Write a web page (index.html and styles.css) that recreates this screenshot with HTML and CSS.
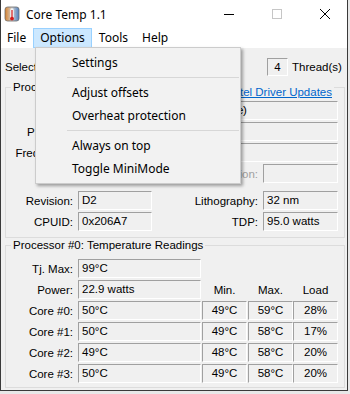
FILE: index.html
```html
<!DOCTYPE html>
<html lang="en">
<head>
    <meta charset="UTF-8">
    <meta name="viewport" content="width=device-width, initial-scale=1.0">
    <title>Core Temp 1.1</title>
    <link rel="stylesheet" href="styles.css">
</head>
<body>
<div class="window">
    <div class="titlebar">
        <svg class="app-icon" viewBox="0 0 16 16">
            <defs>
                <linearGradient id="iconGrad" x1="0" x2="1" y1="0" y2="0">
                    <stop offset="0" stop-color="#d9822b"/>
                    <stop offset="0.5" stop-color="#cfcfcf"/>
                    <stop offset="1" stop-color="#4d7fc0"/>
                </linearGradient>
            </defs>
            <rect x="1" y="1" width="14" height="14" rx="2.5" fill="url(#iconGrad)" stroke="#6b6b6b" stroke-width="0.8"/>
            <rect x="6.3" y="2.3" width="3.4" height="10.5" rx="1.7" fill="#f6f6f6"/>
            <rect x="7.4" y="4" width="1.2" height="8.5" fill="#d41a1a"/>
            <circle cx="8" cy="12.6" r="1.9" fill="#d41a1a"/>
        </svg>
        <span class="title">Core Temp 1.1</span>
        <div class="caption-buttons">
            <svg class="cap-glyph" viewBox="0 0 10 10"><path d="M0 5.5H10" stroke="#000" stroke-width="1"/></svg>
            <svg class="cap-glyph" viewBox="0 0 10 10"><rect x="0.5" y="0.5" width="9" height="9" fill="none" stroke="#c6c6c6" stroke-width="1"/></svg>
            <svg class="cap-glyph" viewBox="0 0 10 10"><path d="M0 0L10 10M10 0L0 10" stroke="#000" stroke-width="1"/></svg>
        </div>
    </div>

    <div class="menubar">
        <span class="menu-item first">File</span>
        <span class="menu-item active">Options</span>
        <span class="menu-item">Tools</span>
        <span class="menu-item">Help</span>
    </div>

    <div class="client">
        <div class="cpu-row">
            <span>Select CPU:</span>
            <span class="combo">Processor #0</span>
            <span class="count">4</span>
            <span class="count-label">Core(s)</span>
            <span class="count">4</span>
            <span class="count-label">Thread(s)</span>
        </div>

        <fieldset class="group info-group">
            <legend>Processor #0: Information</legend>
            <a class="driver-link" href="#">Intel Driver Updates</a>
            <div class="field-row">
                <span class="field-label">Model:</span>
                <span class="field wide">Intel Core i5 2400 (Sandy Bridge)</span>
            </div>
            <div class="field-row">
                <span class="field-label">Platform:</span>
                <span class="field wide">LGA 1155 (Socket H2)</span>
            </div>
            <div class="field-row">
                <span class="field-label">Frequency:</span>
                <span class="field wide">1596.12MHz (99.76 x 16.0)</span>
            </div>
            <div class="field-row vid-row">
                <span class="field-label">VID:</span>
                <span class="field short">1.0372 v</span>
                <span class="field-label right disabled">Modulation:</span>
                <span class="field short2"></span>
            </div>
            <div class="field-row">
                <span class="field-label">Revision:</span>
                <span class="field short">D2</span>
                <span class="field-label right">Lithography:</span>
                <span class="field short2">32 nm</span>
            </div>
            <div class="field-row">
                <span class="field-label">CPUID:</span>
                <span class="field short">0x206A7</span>
                <span class="field-label right">TDP:</span>
                <span class="field short2">95.0 watts</span>
            </div>
        </fieldset>

        <fieldset class="group temp-group">
            <legend>Processor #0: Temperature Readings</legend>
            <div class="field-row">
                <span class="field-label">Tj. Max:</span>
                <span class="field main">99°C</span>
            </div>
            <div class="field-row">
                <span class="field-label">Power:</span>
                <span class="field main">22.9 watts</span>
                <span class="head min">Min.</span>
                <span class="head max">Max.</span>
                <span class="head load">Load</span>
            </div>
            <div class="field-row">
                <span class="field-label">Core #0:</span>
                <span class="field main">50°C</span>
                <span class="field num min">49°C</span>
                <span class="field num max">59°C</span>
                <span class="field num load">28%</span>
            </div>
            <div class="field-row">
                <span class="field-label">Core #1:</span>
                <span class="field main">50°C</span>
                <span class="field num min">49°C</span>
                <span class="field num max">58°C</span>
                <span class="field num load">17%</span>
            </div>
            <div class="field-row">
                <span class="field-label">Core #2:</span>
                <span class="field main">49°C</span>
                <span class="field num min">48°C</span>
                <span class="field num max">58°C</span>
                <span class="field num load">20%</span>
            </div>
            <div class="field-row">
                <span class="field-label">Core #3:</span>
                <span class="field main">50°C</span>
                <span class="field num min">49°C</span>
                <span class="field num max">58°C</span>
                <span class="field num load">20%</span>
            </div>
        </fieldset>
    </div>

    <!-- Options dropdown -->
    <div class="dropdown">
        <div class="drop-item">Settings</div>
        <div class="drop-sep"></div>
        <div class="drop-item">Adjust offsets</div>
        <div class="drop-item">Overheat protection</div>
        <div class="drop-sep"></div>
        <div class="drop-item">Always on top</div>
        <div class="drop-item">Toggle MiniMode</div>
    </div>
</div>
</body>
</html>
```

FILE: styles.css
```css
* {
    box-sizing: border-box;
}
body {
    margin: 0;
    background: #e8e8e8;
    font-family: "Liberation Sans", Arial, sans-serif;
    font-size: 11.5px;
    color: #000;
}
.window {
    position: relative;
    width: 348px;
    height: 391px;
    border: 1px solid #3a3a3a;
    border-top: 0;
    background: #f0f0f0;
}
.titlebar {
    display: flex;
    align-items: center;
    height: 28px;
    background: #fff;
    font-family: "Noto Sans", sans-serif;
    font-size: 12px;
}
.app-icon {
    width: 16px;
    height: 16px;
    margin: 0 6px 0 3px;
}
.caption-buttons {
    display: flex;
    gap: 38px;
    margin-left: auto;
    margin-right: 17px;
}
.cap-glyph {
    width: 10px;
    height: 10px;
}
.menubar {
    display: flex;
    height: 20px;
    background: #fff;
    font-family: "Noto Sans", sans-serif;
    font-size: 12px;
}
.menu-item {
    padding: 0 6px;
    border: 1px solid transparent;
    line-height: 18px;
}
.menu-item.first {
    padding-left: 5px;
}
.menu-item.active {
    background: #cce8ff;
    border-color: #99d1ff;
}
.cpu-row {
    display: flex;
    align-items: center;
    height: 18px;
    margin: 10px 0 0 4px;
}
.combo {
    width: 100px;
    height: 18px;
    margin-left: 4px;
    padding-left: 3px;
    line-height: 16px;
    border: 1px solid #acacac;
    background: #e5e5e5;
}
.count {
    width: 21px;
    height: 18px;
    margin-left: 6px;
    line-height: 16px;
    text-align: center;
    border: 1px solid;
    border-color: #a0a0a0 #fff #fff #a0a0a0;
}
.count-label {
    margin-left: 4px;
}
.count-label + .count {
    margin-left: 26px;
}
.group {
    position: relative;
    min-width: 0;
    margin: 0 2px 0 4px;
    border: 1px solid #dcdcdc;
}
.group legend {
    margin-left: 5px;
    padding: 0 2px;
    line-height: 13px;
}
.info-group {
    margin-top: 5px;
    padding: 7px 6px 4px 0;
}
.temp-group {
    margin-top: 1px;
    padding: 7px 6px 2px 0;
}
.driver-link {
    position: absolute;
    top: -8px;
    right: 10px;
    padding: 0 2px;
    background: #f0f0f0;
    color: #0066cc;
    line-height: 13px;
}
.field-row {
    display: flex;
    align-items: center;
    height: 19px;
    margin-bottom: 2px;
}
.vid-row {
    margin-bottom: 8px;
}
.field-label {
    width: 67px;
    margin-right: 5px;
    text-align: right;
    white-space: nowrap;
}
.field-label.right {
    width: auto;
    flex: 1;
}
.disabled {
    color: #a0a0a0;
}
.field {
    height: 19px;
    padding-left: 3px;
    line-height: 17px;
    white-space: nowrap;
    overflow: hidden;
    border: 1px solid;
    border-color: #a0a0a0 #fff #fff #a0a0a0;
}
.field.wide {
    flex: 1;
    letter-spacing: -0.18px;
}
.field.short {
    width: 74px;
}
.field.short2 {
    width: 75px;
}
.field.main {
    width: 123px;
    margin-right: 1px;
}
.field.num {
    padding-left: 0;
    text-align: center;
}
.min, .max, .load {
    width: 45px;
}
.min {
    margin-right: 1px;
}
.head {
    text-align: center;
}
.dropdown {
    position: absolute;
    top: 47px;
    left: 34px;
    width: 206px;
    padding: 3px 0;
    border: 1px solid #cccccc;
    background: #f2f2f2;
    box-shadow: 2px 2px 3px rgba(0, 0, 0, 0.35);
    font-family: "Noto Sans", sans-serif;
    font-size: 12px;
}
.drop-item {
    height: 23px;
    line-height: 23px;
    padding-left: 36px;
}
.drop-sep {
    height: 1px;
    margin: 3px 1px 3px 31px;
    background: #d7d7d7;
}
```
